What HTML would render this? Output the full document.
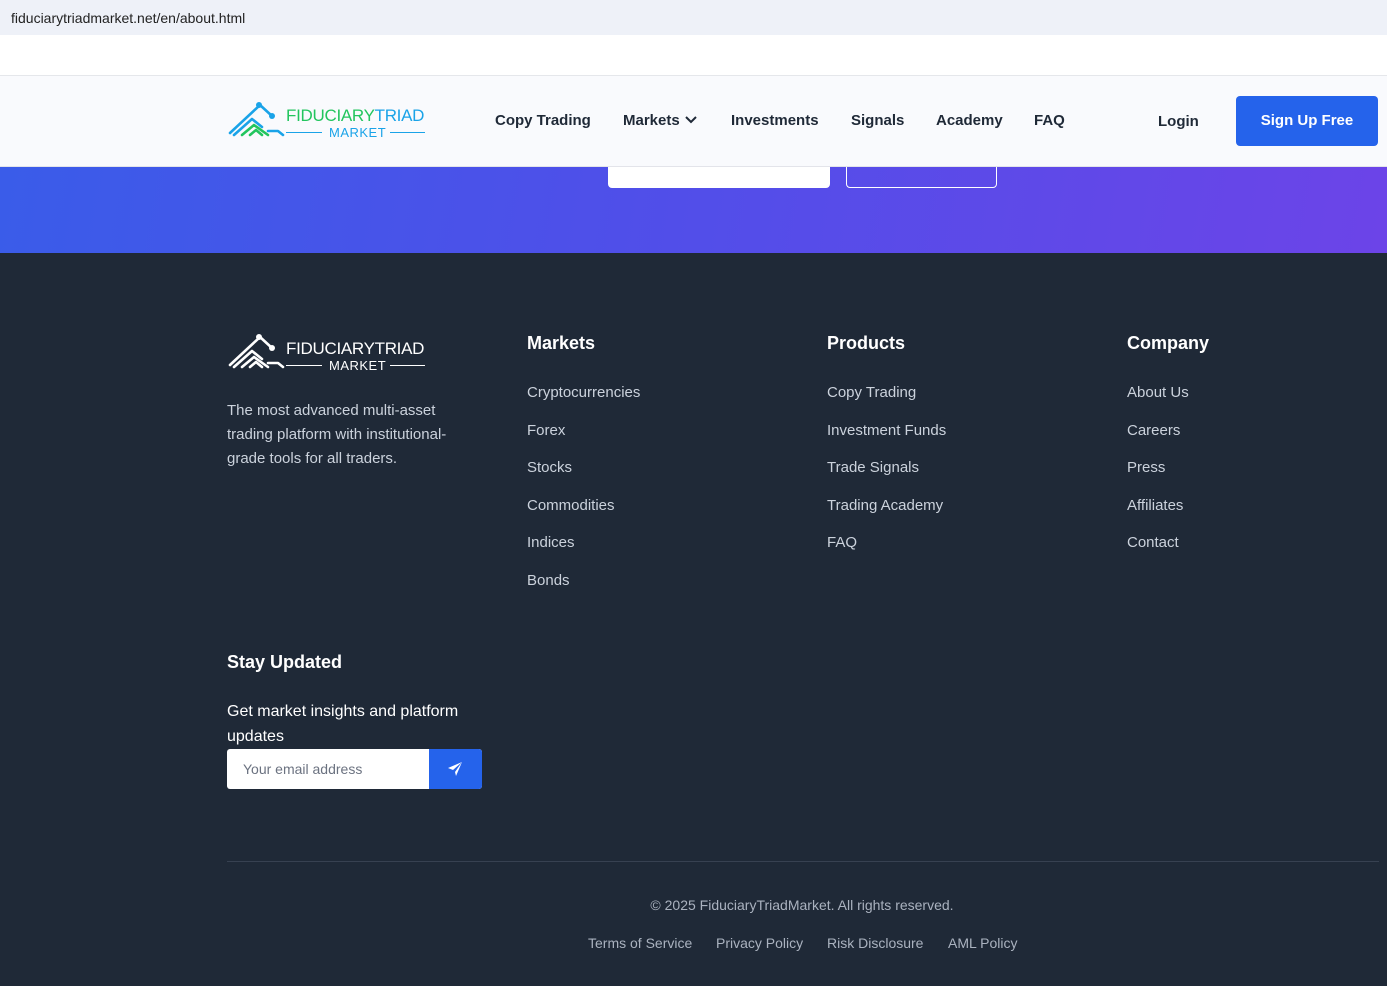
<!DOCTYPE html>
<html><head><meta charset="utf-8"><style>
*{margin:0;padding:0;box-sizing:border-box}
body{width:1387px;height:986px;overflow:hidden;font-family:"Liberation Sans",Arial,sans-serif;background:#1f2937;position:relative}
.abs{position:absolute}
.url{top:0;left:0;width:1387px;height:35px;background:#eef1f8;font-size:14px;color:#222;padding:10px 0 0 11px}
.white{top:35px;left:0;width:1387px;height:41px;background:#fff}
.hero{top:167px;left:0;width:1387px;height:86px;background:linear-gradient(100deg,#3a5ce9 0%,#4f4fe9 45%,#6c44e8 100%)}
.nav{top:75px;left:0;width:1387px;height:92px;background:#f9fafd;border-top:1px solid #e5e7eb;border-bottom:1px solid #e3e4ea}
.nav a{position:absolute;top:36px;font-size:15px;font-weight:bold;color:#1f2937;text-decoration:none}
.btn{top:96px;left:1236px;width:142px;height:50px;background:#2563eb;border-radius:4px;color:#fff;font-weight:bold;font-size:15px;text-align:center;line-height:50px}
.logo-t{font-size:17px;letter-spacing:-0.3px}
.col h3{font-size:18px;color:#fff;font-weight:bold;margin-bottom:30px}
.col a{display:block;color:#cbd2dc;font-size:15px;height:37.6px;text-decoration:none}
.fl{color:#aab2bf;font-size:14px}
</style></head><body>
<div class="abs url">fiduciarytriadmarket.net/en/about.html</div>
<div class="abs white"></div>
<div class="abs hero"></div>
<div class="abs" style="top:150px;left:608px;width:222px;height:38px;background:#fff;border-radius:4px"></div>
<div class="abs" style="top:150px;left:846px;width:151px;height:38px;border:1.5px solid #fff;border-radius:4px"></div>
<div class="abs nav">
  <svg class="abs" style="left:228px;top:25px" width="58" height="36" viewBox="0 0 58 36">
    <g fill="none" stroke-width="2.6" stroke-linecap="round" stroke-linejoin="round">
      <path d="M2 32 L32 4 L44 15" stroke="#1aa3e8"/>
      <path d="M6 34 L24 18 L34 26" stroke="#1aa3e8"/>
      <path d="M14 34 L26 24 L40 34 M22 34 L28 29 L34 34" stroke="#22c55e"/>
      <path d="M40 30 L50 30 L55 34" stroke="#1aa3e8"/>
    </g>
    <circle cx="31" cy="4" r="3" fill="#1aa3e8"/><circle cx="44" cy="15" r="3" fill="#1aa3e8"/>
  </svg>
  <div class="abs logo-t" style="left:286px;top:30px;color:#22c55e">FIDUCIARY<span style="color:#1aa3e8">TRIAD</span></div>
  <div class="abs" style="left:286px;top:56px;width:36px;height:1px;background:#1aa3e8"></div>
  <div class="abs" style="left:329px;top:49px;font-size:13px;color:#1aa3e8;letter-spacing:0.5px">MARKET</div>
  <div class="abs" style="left:390px;top:56px;width:35px;height:1px;background:#1aa3e8"></div>
  <a style="left:495px">Copy Trading</a>
  <a style="left:623px">Markets <svg width="14" height="10" viewBox="0 0 14 10" style="vertical-align:0"><path d="M2 2 L7 7 L12 2" fill="none" stroke="#1f2937" stroke-width="2"/></svg></a>
  <a style="left:731px">Investments</a>
  <a style="left:851px">Signals</a>
  <a style="left:936px">Academy</a>
  <a style="left:1034px">FAQ</a>
  <a style="left:1158px;top:37px">Login</a>
</div>
<div class="abs btn">Sign Up Free</div>

<svg class="abs" style="left:228px;top:333px" width="58" height="36" viewBox="0 0 58 36">
  <g fill="none" stroke="#fff" stroke-width="2.6" stroke-linecap="round" stroke-linejoin="round">
    <path d="M2 32 L32 4 L44 15"/><path d="M6 34 L24 18 L34 26"/>
    <path d="M14 34 L26 24 L40 34 M22 34 L28 29 L34 34"/><path d="M40 30 L50 30 L55 34"/>
  </g>
  <circle cx="31" cy="4" r="3" fill="#fff"/><circle cx="44" cy="15" r="3" fill="#fff"/>
</svg>
<div class="abs logo-t" style="left:286px;top:339px;color:#fff">FIDUCIARYTRIAD</div>
<div class="abs" style="left:286px;top:365px;width:36px;height:1px;background:#fff"></div>
<div class="abs" style="left:329px;top:358px;font-size:13px;color:#fff;letter-spacing:0.5px">MARKET</div>
<div class="abs" style="left:390px;top:365px;width:35px;height:1px;background:#fff"></div>
<div class="abs" style="left:227px;top:399px;width:240px;font-size:15px;line-height:24px;color:#cbd2dc">The most advanced multi-asset trading platform with institutional-grade tools for all traders.</div>

<div class="abs col" style="left:527px;top:333px"><h3>Markets</h3><a>Cryptocurrencies</a><a>Forex</a><a>Stocks</a><a>Commodities</a><a>Indices</a><a>Bonds</a></div>
<div class="abs col" style="left:827px;top:333px"><h3>Products</h3><a>Copy Trading</a><a>Investment Funds</a><a>Trade Signals</a><a>Trading Academy</a><a>FAQ</a></div>
<div class="abs col" style="left:1127px;top:333px"><h3>Company</h3><a>About Us</a><a>Careers</a><a>Press</a><a>Affiliates</a><a>Contact</a></div>

<div class="abs" style="left:227px;top:652px;font-size:18px;font-weight:bold;color:#fff">Stay Updated</div>
<div class="abs" style="left:227px;top:699px;width:250px;font-size:16px;line-height:25px;color:#fff">Get market insights and platform updates</div>
<div class="abs" style="left:227px;top:749px;width:255px;height:40px;background:#fff;border-radius:3px;overflow:hidden">
  <div class="abs" style="left:16px;top:12px;font-size:14px;color:#6b7280">Your email address</div>
  <div class="abs" style="left:202px;top:0;width:53px;height:40px;background:#2563eb">
    <svg class="abs" style="left:18px;top:12px" width="16" height="16" viewBox="0 0 16 16"><path d="M15 1 L1 7 L6 9 L15 1 L8 11 L9 15 Z" fill="#fff"/></svg>
  </div>
</div>
<div class="abs" style="left:227px;top:861px;width:1152px;height:1px;background:#374151"></div>
<div class="abs fl" style="left:0;width:1604px;top:897px;text-align:center">© 2025 FiduciaryTriadMarket. All rights reserved.</div>
<div class="abs fl" style="left:588px;top:935px">Terms of Service</div>
<div class="abs fl" style="left:716px;top:935px">Privacy Policy</div>
<div class="abs fl" style="left:827px;top:935px">Risk Disclosure</div>
<div class="abs fl" style="left:948px;top:935px">AML Policy</div>
</body></html>
